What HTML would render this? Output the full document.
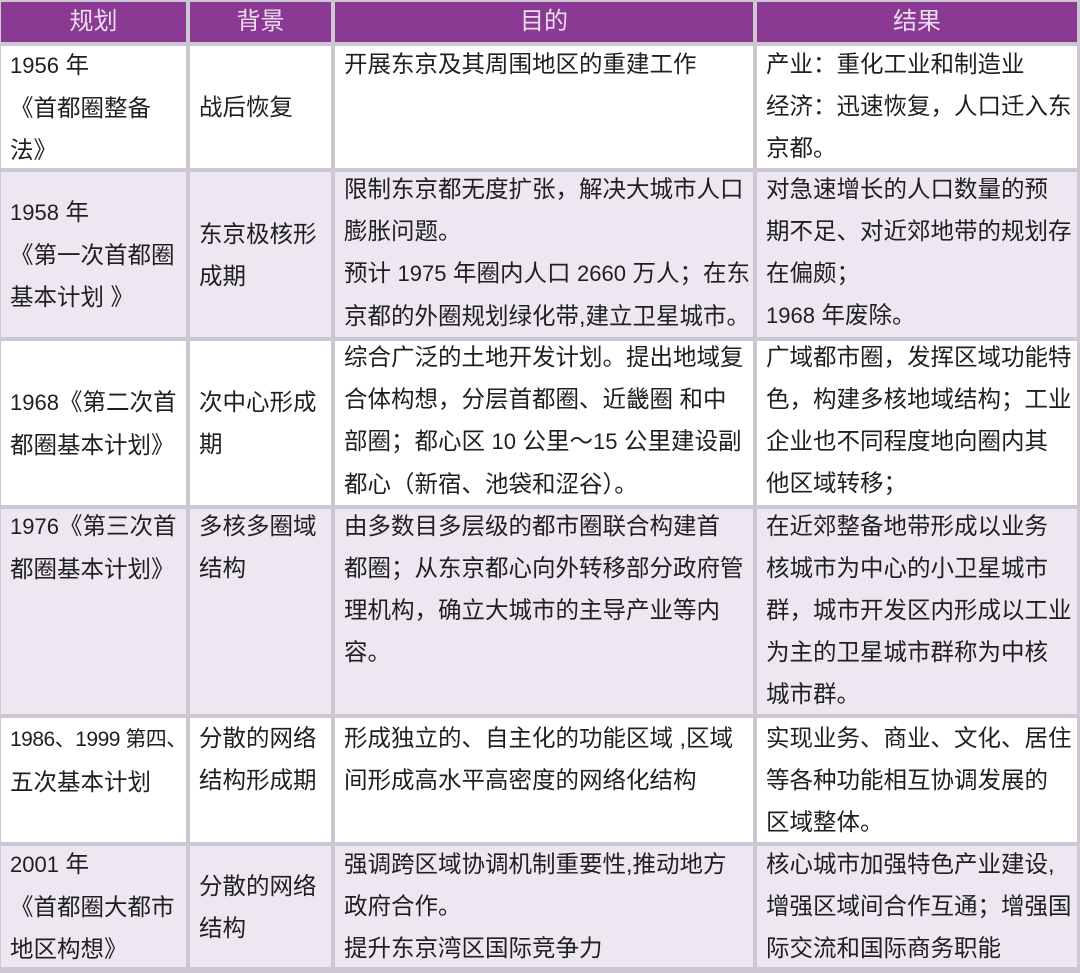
<!DOCTYPE html>
<html><head><meta charset="utf-8"><style>
body{margin:0;width:1080px;height:973px;background:#cdc7d1;position:relative;overflow:hidden;font-family:"Liberation Sans","Noto Sans CJK SC",sans-serif;}
.c{position:absolute;box-sizing:border-box;font-size:23.5px;line-height:42px;color:#1f1f1f;white-space:nowrap;padding-left:9px;}
.h{background:#8b3a94;color:#ecdcf0;text-align:center;padding:0;line-height:40px;font-size:24px;}
.w{background:#fff}.p{background:#ede7f1}
.m{display:flex;flex-direction:column;justify-content:center}
.n{font-size:22px}
</style></head><body>
<div class="c h" style="left:1px;top:2px;width:185px;height:40px">规划</div>
<div class="c h" style="left:190px;top:2px;width:141px;height:40px">背景</div>
<div class="c h" style="left:335px;top:2px;width:418px;height:40px">目的</div>
<div class="c h" style="left:757px;top:2px;width:320px;height:40px">结果</div>

<div class="c w m" style="left:1px;top:46px;width:185px;height:122px"><div><span class="n">1956</span> 年<br>《首都圈整备<br>法》</div></div>
<div class="c w m" style="left:190px;top:46px;width:141px;height:122px"><div>战后恢复</div></div>
<div class="c w" style="left:335px;top:46px;width:418px;height:122px"><div style="margin-top:-3px">开展东京及其周围地区的重建工作</div></div>
<div class="c w" style="left:757px;top:46px;width:320px;height:122px"><div style="margin-top:-3px">产业：重化工业和制造业<br>经济：迅速恢复，人口迁入东<br>京都。</div></div>

<div class="c p m" style="left:1px;top:172px;width:185px;height:165px"><div><span class="n">1958</span> 年<br>《第一次首都圈<br>基本计划 》</div></div>
<div class="c p m" style="left:190px;top:172px;width:141px;height:165px"><div>东京极核形<br>成期</div></div>
<div class="c p" style="left:335px;top:172px;width:418px;height:165px"><div style="margin-top:-4px">限制东京都无度扩张，解决大城市人口<br>膨胀问题。<br>预计 <span class="n">1975</span> 年圈内人口 <span class="n">2660</span> 万人；在东<br>京都的外圈规划绿化带,建立卫星城市。</div></div>
<div class="c p" style="left:757px;top:172px;width:320px;height:165px"><div style="margin-top:-4px">对急速增长的人口数量的预<br>期不足、对近郊地带的规划存<br>在偏颇；<br><span class="n">1968</span> 年废除。</div></div>

<div class="c w m" style="left:1px;top:341px;width:185px;height:164px"><div><span class="n">1968</span>《第二次首<br>都圈基本计划》</div></div>
<div class="c w m" style="left:190px;top:341px;width:141px;height:164px"><div>次中心形成<br>期</div></div>
<div class="c w" style="left:335px;top:341px;width:418px;height:164px"><div style="margin-top:-5px">综合广泛的土地开发计划。提出地域复<br>合体构想，分层首都圈、近畿圈 和中<br>部圈；都心区 <span class="n">10</span> 公里～<span class="n">15</span> 公里建设副<br>都心（新宿、池袋和涩谷）。</div></div>
<div class="c w" style="left:757px;top:341px;width:320px;height:164px"><div style="margin-top:-5px">广域都市圈，发挥区域功能特<br>色，构建多核地域结构；工业<br>企业也不同程度地向圈内其<br>他区域转移；</div></div>

<div class="c p" style="left:1px;top:509px;width:185px;height:205px"><div style="margin-top:-4px"><span class="n">1976</span>《第三次首<br>都圈基本计划》</div></div>
<div class="c p" style="left:190px;top:509px;width:141px;height:205px"><div style="margin-top:-4px">多核多圈域<br>结构</div></div>
<div class="c p" style="left:335px;top:509px;width:418px;height:205px"><div style="margin-top:-4px">由多数目多层级的都市圈联合构建首<br>都圈；从东京都心向外转移部分政府管<br>理机构，确立大城市的主导产业等内<br>容。</div></div>
<div class="c p" style="left:757px;top:509px;width:320px;height:205px"><div style="margin-top:-4px">在近郊整备地带形成以业务<br>核城市为中心的小卫星城市<br>群，城市开发区内形成以工业<br>为主的卫星城市群称为中核<br>城市群。</div></div>

<div class="c w" style="left:1px;top:718px;width:185px;height:124px;overflow:hidden"><div style="margin-top:-1px"><span style="font-size:21px;letter-spacing:-0.5px">1986、1999 第四、</span><br>五次基本计划</div></div>
<div class="c w" style="left:190px;top:718px;width:141px;height:124px"><div style="margin-top:-1px">分散的网络<br>结构形成期</div></div>
<div class="c w" style="left:335px;top:718px;width:418px;height:124px"><div style="margin-top:-1px">形成独立的、自主化的功能区域 ,区域<br>间形成高水平高密度的网络化结构</div></div>
<div class="c w" style="left:757px;top:718px;width:320px;height:124px"><div style="margin-top:-1px">实现业务、商业、文化、居住<br>等各种功能相互协调发展的<br>区域整体。</div></div>

<div class="c p m" style="left:1px;top:846px;width:185px;height:121px"><div><span class="n">2001</span> 年<br>《首都圈大都市<br>地区构想》</div></div>
<div class="c p m" style="left:190px;top:846px;width:141px;height:121px"><div>分散的网络<br>结构</div></div>
<div class="c p" style="left:335px;top:846px;width:418px;height:121px"><div style="margin-top:-3px">强调跨区域协调机制重要性,推动地方<br>政府合作。<br>提升东京湾区国际竞争力</div></div>
<div class="c p" style="left:757px;top:846px;width:320px;height:121px"><div style="margin-top:-3px">核心城市加强特色产业建设,<br>增强区域间合作互通；增强国<br>际交流和国际商务职能</div></div>
</body></html>
